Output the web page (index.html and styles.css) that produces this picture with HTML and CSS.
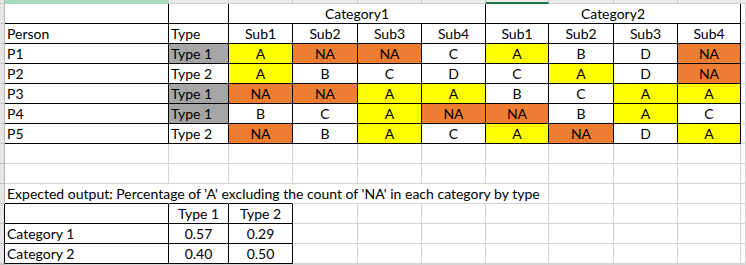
FILE: index.html
```html
<!DOCTYPE html>
<html>
<head>
<meta charset="utf-8">
<link rel="stylesheet" href="styles.css">
</head>
<body>
<div class="sheet">
  <!-- column header strip -->
  <div class="c g"></div>
  <div class="c hd sel"></div>
  <div class="c hd"></div><div class="c hd"></div><div class="c hd"></div><div class="c hd"></div><div class="c hd"></div>
  <div class="c hd act"></div>
  <div class="c hd"></div><div class="c hd"></div><div class="c hd"></div><div class="c hd"></div><div class="c hd end"></div>

  <!-- row 1 -->
  <div class="c g"></div>
  <div class="c k"></div>
  <div class="c k"></div>
  <div class="c k ctr span4">Category1</div>
  <div class="c k ctr span4">Category2</div>
  <div class="c"></div><div class="c end"></div>

  <!-- row 2 -->
  <div class="c g"></div>
  <div class="c k">Person</div>
  <div class="c k">Type</div>
  <div class="c k ctr">Sub1</div><div class="c k ctr">Sub2</div><div class="c k ctr">Sub3</div><div class="c k ctr">Sub4</div>
  <div class="c k ctr">Sub1</div><div class="c k ctr">Sub2</div><div class="c k ctr">Sub3</div><div class="c k ctr">Sub4</div>
  <div class="c"></div><div class="c end"></div>

  <!-- P1 -->
  <div class="c g"></div>
  <div class="c k">P1</div>
  <div class="c k gr">Type 1</div>
  <div class="c k ctr y">A</div><div class="c k ctr o">NA</div><div class="c k ctr o">NA</div><div class="c k ctr">C</div>
  <div class="c k ctr y">A</div><div class="c k ctr">B</div><div class="c k ctr">D</div><div class="c k ctr o">NA</div>
  <div class="c"></div><div class="c end"></div>

  <!-- P2 -->
  <div class="c g"></div>
  <div class="c k">P2</div>
  <div class="c k">Type 2</div>
  <div class="c k ctr y">A</div><div class="c k ctr">B</div><div class="c k ctr">C</div><div class="c k ctr">D</div>
  <div class="c k ctr">C</div><div class="c k ctr y">A</div><div class="c k ctr">D</div><div class="c k ctr o">NA</div>
  <div class="c"></div><div class="c end"></div>

  <!-- P3 -->
  <div class="c g"></div>
  <div class="c k">P3</div>
  <div class="c k gr">Type 1</div>
  <div class="c k ctr o">NA</div><div class="c k ctr o">NA</div><div class="c k ctr y">A</div><div class="c k ctr y">A</div>
  <div class="c k ctr">B</div><div class="c k ctr">C</div><div class="c k ctr y">A</div><div class="c k ctr y">A</div>
  <div class="c"></div><div class="c end"></div>

  <!-- P4 -->
  <div class="c g"></div>
  <div class="c k">P4</div>
  <div class="c k gr">Type 1</div>
  <div class="c k ctr">B</div><div class="c k ctr">C</div><div class="c k ctr y">A</div><div class="c k ctr o">NA</div>
  <div class="c k ctr o">NA</div><div class="c k ctr">B</div><div class="c k ctr y">A</div><div class="c k ctr">C</div>
  <div class="c"></div><div class="c end"></div>

  <!-- P5 -->
  <div class="c g"></div>
  <div class="c k">P5</div>
  <div class="c k">Type 2</div>
  <div class="c k ctr o">NA</div><div class="c k ctr">B</div><div class="c k ctr y">A</div><div class="c k ctr">C</div>
  <div class="c k ctr y">A</div><div class="c k ctr o">NA</div><div class="c k ctr">D</div><div class="c k ctr y">A</div>
  <div class="c"></div><div class="c end"></div>

  <!-- empty rows -->
  <div class="c g"></div>
  <div class="c"></div><div class="c"></div><div class="c"></div><div class="c"></div><div class="c"></div><div class="c"></div>
  <div class="c"></div><div class="c"></div><div class="c"></div><div class="c"></div><div class="c"></div><div class="c end"></div>

  <div class="c g"></div>
  <div class="c"></div><div class="c"></div><div class="c"></div><div class="c"></div><div class="c"></div><div class="c"></div>
  <div class="c"></div><div class="c"></div><div class="c"></div><div class="c"></div><div class="c"></div><div class="c end"></div>

  <!-- expected output -->
  <div class="c g"></div>
  <div class="c kb nr">Expected output: Percentage of 'A' excluding the count of 'NA' in each category by type</div>
  <div class="c kb nr"></div><div class="c kb nr"></div>
  <div class="c nr"></div><div class="c nr"></div><div class="c nr"></div>
  <div class="c"></div><div class="c"></div><div class="c"></div><div class="c"></div><div class="c"></div><div class="c end"></div>

  <!-- result table -->
  <div class="c g gk"></div>
  <div class="c k"></div>
  <div class="c k ctr">Type 1</div>
  <div class="c k ctr">Type 2</div>
  <div class="c"></div><div class="c"></div><div class="c"></div><div class="c"></div><div class="c"></div><div class="c"></div><div class="c"></div><div class="c"></div><div class="c end"></div>

  <div class="c g gk"></div>
  <div class="c k">Category 1</div>
  <div class="c k ctr">0.57</div>
  <div class="c k ctr">0.29</div>
  <div class="c"></div><div class="c"></div><div class="c"></div><div class="c"></div><div class="c"></div><div class="c"></div><div class="c"></div><div class="c"></div><div class="c end"></div>

  <div class="c g gk"></div>
  <div class="c k">Category 2</div>
  <div class="c k ctr">0.40</div>
  <div class="c k ctr">0.50</div>
  <div class="c"></div><div class="c"></div><div class="c"></div><div class="c"></div><div class="c"></div><div class="c"></div><div class="c"></div><div class="c"></div><div class="c end"></div>

  <!-- partial row -->
  <div class="c g"></div>
  <div class="c"></div><div class="c"></div><div class="c"></div><div class="c"></div><div class="c"></div><div class="c"></div>
  <div class="c"></div><div class="c"></div><div class="c"></div><div class="c"></div><div class="c"></div><div class="c end"></div>
</div>
</body>
</html>
```

FILE: styles.css
```css
html, body {
  margin: 0;
  padding: 0;
  background: #ffffff;
  overflow: hidden;
}

.sheet {
  display: grid;
  width: 746px;
  height: 265px;
  grid-template-columns: 5px 164px 60px 64px 65px 64px 64px 63px 65px 64px 63px 4px 1fr;
  grid-template-rows: 4px repeat(13, 20px) 1fr;
  font-family: Lato, "Liberation Sans", sans-serif;
  font-size: 14px;
  color: #000000;
}

.c {
  box-sizing: border-box;
  border-right: 1px solid #d4d4d4;
  border-bottom: 1px solid #d4d4d4;
  padding: 0 2px;
  line-height: 19px;
  white-space: nowrap;
  min-width: 0;
}

.end {
  border-right: none;
}

.g {
  background: #e6e6e6;
  border-right-color: #b8b8b8;
  border-bottom-color: #c4c4c4;
  padding: 0;
}

.gk {
  border-right-color: #000000;
}

.hd {
  background: #ececec;
  border-right-color: #c4c4c4;
  border-bottom-color: #d0d0d0;
}

.hd.sel {
  background: #a9d8bc;
  border-bottom-color: #a9d8bc;
}

.hd.act {
  border-bottom: 2px solid #217346;
}

.k {
  border-right-color: #000000;
  border-bottom-color: #000000;
}

.kb {
  border-bottom-color: #000000;
}

.nr {
  border-right-color: transparent;
}

.span4 {
  grid-column: span 4;
}

.ctr {
  text-align: center;
}

.y {
  background: #ffff00;
}

.o {
  background: #ed7d31;
}

.gr {
  background: #a6a6a6;
}
```
